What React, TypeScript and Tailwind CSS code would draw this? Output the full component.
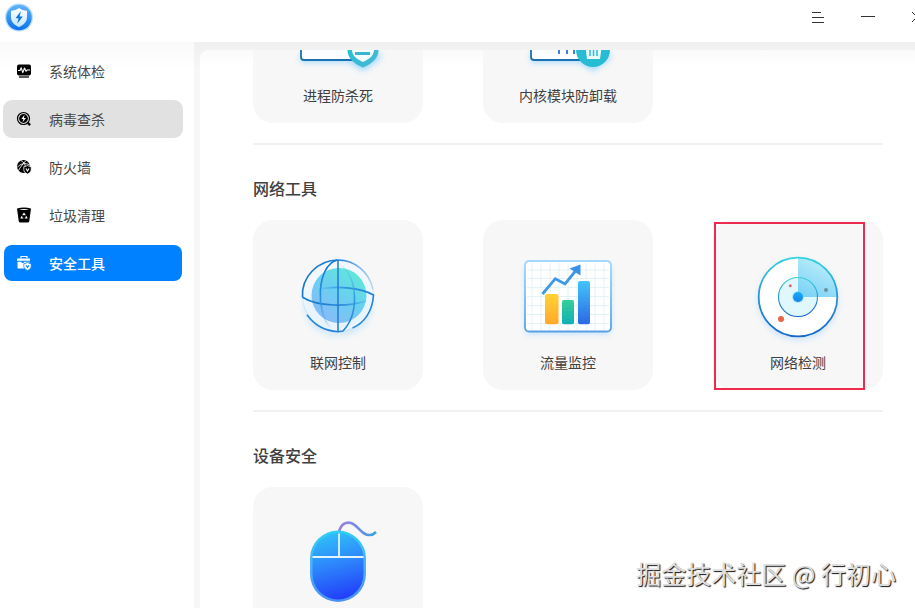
import type { ReactNode } from "react";

function Logo() {
  return (
    <svg className="size-8" viewBox="0 0 32 32" aria-hidden="true">
      <defs>
        <linearGradient id="logoBg" x1="0" y1="0" x2="0" y2="1">
          <stop offset="0" stopColor="#62b4f4" />
          <stop offset="1" stopColor="#0a72ee" />
        </linearGradient>
        <linearGradient id="logoShield" x1="0" y1="0" x2="0" y2="1">
          <stop offset="0" stopColor="#ffffff" />
          <stop offset="1" stopColor="#c4e6ff" />
        </linearGradient>
      </defs>
      <circle cx="16" cy="15.500" r="14" fill="#b5ddff" />
      <circle cx="16" cy="15.500" r="12.700" fill="url(#logoBg)" />
      <path d="M16 6c2.600 1.800 5 2.600 8 2.800V15c0 4.600-3.200 8-8 10-4.800-2-8-5.400-8-10V8.800c3-.2 5.400-1 8-2.800z" fill="url(#logoShield)" />
      <path d="M18 9l-5.500 7.200h3l-1.300 5.600 5.600-7.300h-3.200z" fill="#1474dc" />
    </svg>
  );
}

function CheckupIcon() {
  return (
    <svg className="size-4" viewBox="0 0 16 16" aria-hidden="true">
      <rect x="1" y="1.500" width="14" height="11" rx="2" fill="currentColor" />
      <path d="M3 14h10" stroke="currentColor" strokeWidth="1.300" />
      <path d="M2 7.500h2l1.200-2.700 1.600 4.800 1.700-4.600L10 8.300l1-1.300h3" fill="none" stroke="#fff" strokeWidth="1.100" strokeLinejoin="round" />
    </svg>
  );
}

function VirusIcon() {
  return (
    <svg className="size-4" viewBox="0 0 16 16" aria-hidden="true">
      <circle cx="7.500" cy="7.500" r="6" fill="none" stroke="currentColor" strokeWidth="1.200" />
      <circle cx="7.500" cy="7.500" r="4.400" fill="currentColor" />
      <path d="M8.500 3.800L5.400 8h2l-.8 3.300L9.900 7h-2z" fill="#fff" />
      <path d="M11.500 11.500l2.600 2.600" stroke="currentColor" strokeWidth="2.400" />
    </svg>
  );
}

function FirewallIcon() {
  return (
    <svg className="size-4" viewBox="0 0 16 16" aria-hidden="true">
      <circle cx="7.500" cy="7.500" r="6.500" fill="currentColor" />
      <path d="M1 8.500C4.500 4.500 9 3.500 14 6M5 1.500c2.500 1.500 4 3.500 4.500 6M2.500 11.500C4 8.500 6 6 10 1.500" fill="none" stroke="#fff" strokeWidth=".9" />
      <path d="M11.500 6.500c1.200.8 2.300 1.100 3.700 1.200v3c0 2-1.500 3.500-3.700 4.400-2.200-.9-3.700-2.400-3.700-4.400v-3c1.400-.1 2.500-.4 3.700-1.200z" fill="currentColor" stroke="#fff" strokeWidth=".8" />
      <path d="M10 9.500l1.500 2.500L13 9.500" fill="none" stroke="#fff" strokeWidth="1.100" />
    </svg>
  );
}

function TrashIcon() {
  return (
    <svg className="size-4" viewBox="0 0 16 16" aria-hidden="true">
      <path d="M1 1.500Q8-.5 15 1.500L13.300 14q-.2 1.500-1.800 1.500h-7Q2.900 15.500 2.700 14z" fill="currentColor" />
      <path d="M3 2.600q5-1 10 0-5 1-10 0z" fill="#fff" />
      <path d="M6.700 8.200L8 6.400l1.300 1.800M10 9.300l.8 1.700H8.800M7.300 11H5.200L6 9.300" fill="none" stroke="#fff" strokeWidth="1.100" />
    </svg>
  );
}

function ToolboxIcon() {
  return (
    <svg className="size-4" viewBox="0 0 16 16" aria-hidden="true">
      <path d="M5 3.500V1.500h6v2" fill="none" stroke="currentColor" strokeWidth="1.200" />
      <path d="M1 3.500h13v2.300H1zM1.500 6.700h4.200v1.200h2V6.700h5.800v1H10L8 9.200v4.300H1.500z" fill="currentColor" />
      <path d="M11.500 7.500c1.200.8 2.300 1.100 3.700 1.200v2.500c0 2-1.500 3.300-3.700 4.200-2.200-.9-3.700-2.200-3.700-4.200V8.700c1.400-.1 2.500-.4 3.700-1.200z" fill="currentColor" stroke="#0081ff" strokeWidth=".7" />
      <path d="M10 10.200l1.500 2.200 1.500-2.200" fill="none" stroke="#0081ff" strokeWidth="1.100" />
    </svg>
  );
}

const art = "block h-[132px] w-[170px]";

function ProcessArt() {
  return (
    <svg className={art} viewBox="0 0 170 132" aria-hidden="true">
      <defs>
        <linearGradient id="shieldG" x1="0" y1="0" x2="1" y2="1">
          <stop offset="0" stopColor="#1cc3dc" />
          <stop offset="1" stopColor="#4cb6cc" />
        </linearGradient>
        <filter id="glowA" x="-30%" y="-30%" width="160%" height="160%">
          <feGaussianBlur stdDeviation="3" />
        </filter>
      </defs>
      <path d="M48 100v9h48l14 9 17-12v-6z" fill="#7fcdff" opacity=".75" filter="url(#glowA)" />
      <rect x="48" y="45" width="72" height="62" rx="3" fill="#fcfeff" stroke="#1c71ae" strokeWidth="1.800" />
      <path d="M110 78c5 4 10 5 15.500 5.500V97c0 8-6 13.500-15.500 17.500C100.500 110.500 94.500 105 94.500 97V83.500C100 83 105 82 110 78z" fill="url(#shieldG)" />
      <path d="M110 84c4 3 7 4 11 4v9c0 5-4 9-11 12-7-3-11-7-11-12v-9c4 0 7-1 11-4z" fill="#f1fdff" />
      <path d="M102 100.500h15" stroke="#36b7cd" strokeWidth="3" />
    </svg>
  );
}

function KernelArt() {
  return (
    <svg className={art} viewBox="0 0 170 132" aria-hidden="true">
      <path d="M48 100v9h48l14 9 17-12v-6z" fill="#7fcdff" opacity=".75" filter="url(#glowA)" />
      <rect x="48" y="45" width="72" height="62" rx="3" fill="#fcfeff" stroke="#1c71ae" strokeWidth="1.800" />
      <path d="M76 96v5M84 96v5M91 96v5" stroke="#3f7fe0" strokeWidth="2" />
      <circle cx="110" cy="97" r="17" fill="#27bcd3" />
      <path d="M102 91h17l-2 15h-13z" fill="#eafcff" />
      <path d="M107 94v9M110.500 94v9M114 94v9" stroke="#27bcd3" strokeWidth="1.500" />
    </svg>
  );
}

function GlobeArt() {
  return (
    <svg className={art} viewBox="0 0 170 132" aria-hidden="true">
      <defs>
        <linearGradient id="globeFill" x1=".9" y1="0" x2=".2" y2="1">
          <stop offset="0" stopColor="#5cedd6" />
          <stop offset=".5" stopColor="#6bcff0" />
          <stop offset="1" stopColor="#8ab8f8" />
        </linearGradient>
        <linearGradient id="globeLine" x1="0" y1="0" x2="1" y2="0">
          <stop offset="0" stopColor="#1576cd" />
          <stop offset=".55" stopColor="#2683da" />
          <stop offset="1" stopColor="#2683da" stopOpacity=".2" />
        </linearGradient>
        <linearGradient id="globeDown" x1="0" y1="0" x2="0" y2="1">
          <stop offset="0" stopColor="#1576cd" />
          <stop offset=".6" stopColor="#2b93e0" />
          <stop offset="1" stopColor="#5fb4f0" stopOpacity=".15" />
        </linearGradient>
        <linearGradient id="globeUp" x1="0" y1="0" x2="0" y2="1">
          <stop offset="0" stopColor="#5fb4f0" stopOpacity=".15" />
          <stop offset=".5" stopColor="#2b9be0" />
          <stop offset="1" stopColor="#2480dc" />
        </linearGradient>
        <linearGradient id="globeLineB" x1="0" y1="0" x2="1" y2="0">
          <stop offset="0" stopColor="#2693e5" stopOpacity=".1" />
          <stop offset=".5" stopColor="#2b93e0" />
          <stop offset="1" stopColor="#2480dc" />
        </linearGradient>
      </defs>
      <ellipse cx="85" cy="86" rx="34" ry="30" fill="#a8dcff" opacity=".5" filter="url(#glowA)" />
      <circle cx="85" cy="76" r="35.500" fill="#f0f8ff" opacity=".75" stroke="#bcdcf8" strokeWidth=".8" />
      <circle cx="86" cy="75.500" r="27.500" fill="url(#globeFill)" />
      <g fill="none" strokeWidth="1.600">
        <path d="M49.500 77.300C48 57 65 40 85 40c17 0 31 12 35 29" stroke="url(#globeLine)" />
        <path d="M49.500 77.300C65 87 95 87 113 81" stroke="url(#globeLine)" />
        <path d="M84 40C63 46 63 93 77 107" stroke="url(#globeDown)" />
        <path d="M66 69c17-3 40-2 54.500 6-1 16-9 28-21 33" stroke="url(#globeLineB)" />
        <path d="M89 46c16 14 17 48 1 65l-5 .7c-14-1-24-7-31-17" stroke="url(#globeUp)" />
        <path d="M85 40v71.500" stroke="#2480d4" />
      </g>
    </svg>
  );
}

function ChartArt() {
  return (
    <svg className={art} viewBox="0 0 170 132" aria-hidden="true">
      <defs>
        <linearGradient id="frameG" x1="0" y1="0" x2="0" y2="1">
          <stop offset="0" stopColor="#a4d8fc" />
          <stop offset="1" stopColor="#5a9fe4" />
        </linearGradient>
        <linearGradient id="yellowG" x1="0" y1="0" x2="0" y2="1">
          <stop offset="0" stopColor="#ffd335" />
          <stop offset="1" stopColor="#ffa829" />
        </linearGradient>
        <linearGradient id="greenG" x1="0" y1="0" x2="0" y2="1">
          <stop offset="0" stopColor="#35cf9b" />
          <stop offset="1" stopColor="#13aeb4" />
        </linearGradient>
        <linearGradient id="blueG" x1="0" y1="0" x2="0" y2="1">
          <stop offset="0" stopColor="#43c5fb" />
          <stop offset="1" stopColor="#2b68e4" />
        </linearGradient>
      </defs>
      <rect x="42" y="46" width="86" height="68" rx="4" fill="#9fd3ff" opacity=".6" filter="url(#glowA)" />
      <rect x="42" y="41" width="86" height="70.500" rx="4" fill="#fff" stroke="url(#frameG)" strokeWidth="1.800" />
      <path d="M44 50h82M44 58.500h82M44 67.500h82M44 76.500h82M44 85.500h82M44 94.500h82M44 103.500h82M49 43v67M58 43v67M67 43v67M76 43v67M85 43v67M94 43v67M103 43v67M112 43v67M121 43v67" stroke="#dff0f4" strokeWidth=".9" />
      <rect x="62" y="74" width="13.500" height="30.300" rx="2" fill="url(#yellowG)" />
      <rect x="79" y="80" width="12" height="24.300" rx="2" fill="url(#greenG)" />
      <rect x="95" y="61" width="12" height="43.300" rx="2" fill="url(#blueG)" />
      <path d="M59.500 74l12.800-15.300L82 64l10.500-13" fill="none" stroke="#4298e8" strokeWidth="2.800" />
      <path d="M97.500 44.500v11l-11-7z" fill="#3a92e6" />
    </svg>
  );
}

function RadarArt() {
  return (
    <svg className={art} viewBox="0 0 170 132" aria-hidden="true">
      <defs>
        <linearGradient id="ringG" x1="0" y1="0" x2="0" y2="1">
          <stop offset="0" stopColor="#35d2e0" />
          <stop offset=".5" stopColor="#2a94cf" />
          <stop offset="1" stopColor="#1767cb" />
        </linearGradient>
        <linearGradient id="sweepG" x1=".8" y1="0" x2=".3" y2="1">
          <stop offset="0" stopColor="#c2f0fc" />
          <stop offset="1" stopColor="#7dd3f5" />
        </linearGradient>
        <linearGradient id="dotG" x1="0" y1="0" x2="0" y2="1">
          <stop offset="0" stopColor="#19aef5" />
          <stop offset="1" stopColor="#1480ed" />
        </linearGradient>
      </defs>
      <circle cx="85" cy="80" r="40" fill="#9fcfff" opacity=".5" filter="url(#glowA)" />
      <circle cx="85" cy="77" r="39.300" fill="#fff" />
      <circle cx="85" cy="77" r="19.500" fill="#e0f7fd" />
      <path d="M85 77V38a39 39 0 0 1 39 39z" fill="url(#sweepG)" />
      <circle cx="85" cy="77" r="39.300" fill="none" stroke="url(#ringG)" strokeWidth="1.800" />
      <circle cx="85" cy="77" r="19.500" fill="none" stroke="url(#ringG)" strokeWidth="1.100" />
      <circle cx="85" cy="77" r="6" fill="#6fd3fb" opacity=".5" />
      <circle cx="85" cy="77" r="5" fill="url(#dotG)" />
      <circle cx="77.300" cy="65.700" r="1.500" fill="#da6b60" />
      <circle cx="113" cy="70" r="2" fill="#6f8f9e" />
      <circle cx="68" cy="99" r="3" fill="#ec6542" />
    </svg>
  );
}

function MouseArt() {
  return (
    <svg className={art} viewBox="0 0 170 132" aria-hidden="true">
      <defs>
        <linearGradient id="mouseEdge" x1="0" y1="0" x2="0" y2="1">
          <stop offset="0" stopColor="#2fd0f5" />
          <stop offset=".5" stopColor="#4fb0f8" />
          <stop offset="1" stopColor="#4a90f5" />
        </linearGradient>
        <linearGradient id="mouseBody" x1=".4" y1="0" x2=".6" y2="1">
          <stop offset="0" stopColor="#30bdf8" />
          <stop offset=".45" stopColor="#2d87fb" />
          <stop offset="1" stopColor="#213dfa" />
        </linearGradient>
        <linearGradient id="cableG" x1="0" y1="0" x2="1" y2="0">
          <stop offset="0" stopColor="#9a7fdc" />
          <stop offset=".45" stopColor="#7a8ae8" />
          <stop offset="1" stopColor="#35a5dc" />
        </linearGradient>
      </defs>
      <path d="M86 45c2-8 7-10.500 12-9 7 2 11 13 19 12 3 0 4.500-1.500 6-3" fill="none" stroke="url(#cableG)" strokeWidth="2.600" />
      <rect x="57" y="43.500" width="56" height="71.500" rx="28" fill="url(#mouseEdge)" />
      <rect x="59.500" y="46" width="51" height="66.500" rx="25.500" fill="url(#mouseBody)" />
      <path d="M59.500 70h51M86 46.500V70" stroke="#e2f5ff" strokeWidth="1.800" />
    </svg>
  );
}

const navItems = [
  { label: "系统体检", icon: <CheckupIcon />, look: "text-black", text: "text-[#484848]" },
  { label: "病毒查杀", icon: <VirusIcon />, look: "bg-[#e1e1e1] text-black ring-1 ring-[#e1e1e1]", text: "text-[#484848]" },
  { label: "防火墙", icon: <FirewallIcon />, look: "text-black", text: "text-[#484848]" },
  { label: "垃圾清理", icon: <TrashIcon />, look: "text-black", text: "text-[#484848]" },
  { label: "安全工具", icon: <ToolboxIcon />, look: "bg-[#0081ff] text-white", text: "font-medium text-white" },
];

function ToolCard({ label, marked, children }: { label?: string; marked?: boolean; children: ReactNode }) {
  return (
    <button className="relative h-[170px] w-[170px] rounded-[20px] bg-[#f7f7f7] text-center">
      <span className="flex h-full flex-col items-center">
        {children}
        {label && <span className="text-sm leading-5">{label}</span>}
      </span>
      {marked && <span className="absolute top-0.5 left-px h-[168px] w-[151px] border-2 border-[#ee2a50]" />}
    </button>
  );
}

function Section({ title, children }: { title?: string; children: ReactNode }) {
  return (
    <section className="mb-8 border-b-2 border-[#f2f2f2] pb-5">
      {title && <h2 className="mb-[21px] text-base leading-[22px] font-medium">{title}</h2>}
      <div className="grid grid-cols-[repeat(3,170px)] justify-between">{children}</div>
    </section>
  );
}

export default function App() {
  return (
    <div className="relative flex h-screen flex-col overflow-hidden bg-white font-['Noto_Sans_CJK_SC',sans-serif] text-[#404040]">
      <header className="flex h-[42px] shrink-0 items-start justify-between overflow-hidden pl-[3px]">
        <div className="pt-0.5">
          <Logo />
        </div>
        <div className="-mr-2 flex gap-9 pt-2.5 text-[#333333]">
          <button aria-label="菜单">
            <svg className="h-4 w-3.5" viewBox="0 0 14 16" aria-hidden="true">
              <path d="M1 2.500h9M1 7.500h12M1 12.500h12" stroke="currentColor" />
            </svg>
          </button>
          <button aria-label="最小化">
            <svg className="h-4 w-3.5" viewBox="0 0 14 16" aria-hidden="true">
              <path d="M0 6.500h14" stroke="currentColor" />
            </svg>
          </button>
          <button aria-label="关闭">
            <svg className="h-4 w-3" viewBox="0 0 12 16" aria-hidden="true">
              <path d="M1 2l10 10M11 2L1 12" stroke="currentColor" />
            </svg>
          </button>
        </div>
      </header>

      <div className="flex min-h-0 flex-1">
        <nav className="w-[194px] shrink-0 bg-linear-to-b from-[#fafafa] to-white to-5% pt-[11px] pr-3 pl-1">
          <ul className="flex flex-col gap-3">
            {navItems.map((item) => (
              <li key={item.label}>
                <button className={`flex h-9 w-full items-center gap-[17px] rounded-lg pl-3 text-sm ${item.look}`}>
                  {item.icon}
                  <span className={item.text}>{item.label}</span>
                </button>
              </li>
            ))}
          </ul>
        </nav>

        <div className="min-w-0 flex-1 bg-linear-to-b from-[#f0f0f0] to-[#f7f7f7] to-5% pt-2 pl-1.5">
          <main className="h-full overflow-hidden rounded-tl-lg bg-linear-to-b from-[#fbfbfb] to-white to-3% pr-8 pl-[53px]">
            <div className="-mt-[97px]">
              <Section>
                <ToolCard label="进程防杀死">
                  <ProcessArt />
                </ToolCard>
                <ToolCard label="内核模块防卸载">
                  <KernelArt />
                </ToolCard>
              </Section>
              <Section title="网络工具">
                <ToolCard label="联网控制">
                  <GlobeArt />
                </ToolCard>
                <ToolCard label="流量监控">
                  <ChartArt />
                </ToolCard>
                <ToolCard label="网络检测" marked>
                  <RadarArt />
                </ToolCard>
              </Section>
              <Section title="设备安全">
                <ToolCard>
                  <MouseArt />
                </ToolCard>
              </Section>
            </div>
          </main>
        </div>
      </div>

      <p className="absolute right-[19px] bottom-[15px] text-[25px] leading-10 text-[#dedede] [text-shadow:1px_1px_1px_#111111]">
        掘金技术社区 @ 行初心
      </p>
    </div>
  );
}
